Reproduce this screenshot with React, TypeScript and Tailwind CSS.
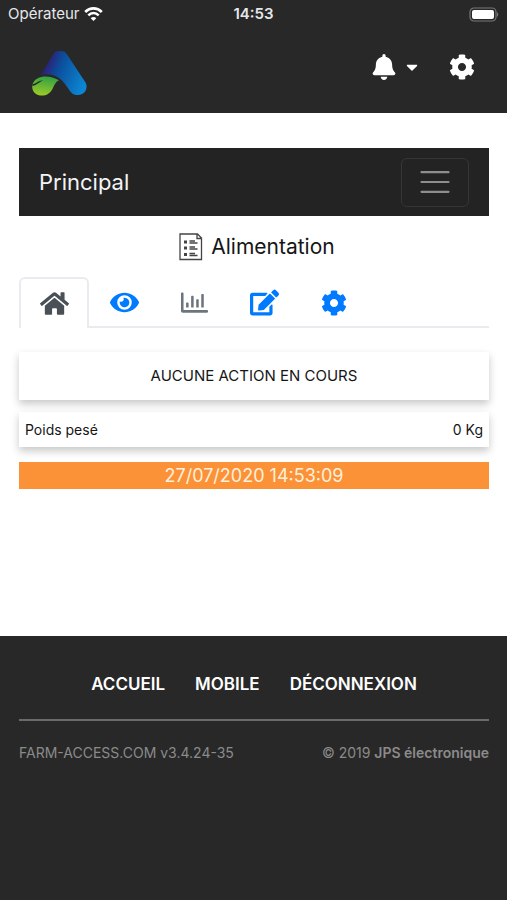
import { useState } from "react";
import {
  FaBell,
  FaCaretDown,
  FaCog,
  FaEdit,
  FaEye,
  FaHome,
  FaRegChartBar,
} from "react-icons/fa";

const tabs = [
  { id: "home", label: "Accueil", icon: FaHome, color: "text-[#495057]", size: 29 },
  { id: "view", label: "Visualisation", icon: FaEye, color: "text-[#007bff]", size: 29 },
  { id: "stats", label: "Statistiques", icon: FaRegChartBar, color: "text-[#6c757d]", size: 27 },
  { id: "edit", label: "Modifier", icon: FaEdit, color: "text-[#007bff]", size: 29 },
  { id: "settings", label: "Réglages", icon: FaCog, color: "text-[#007bff]", size: 26 },
];

const links = ["Accueil", "Mobile", "Déconnexion"];

const Logo = () => (
  <svg width="55" height="46" viewBox="0 0 56 46" role="img" aria-label="Farm Access">
    <defs>
      <linearGradient id="blue" x1="0.1" y1="0.4" x2="0.95" y2="0.75">
        <stop offset="0" stopColor="#2a2478" />
        <stop offset="0.3" stopColor="#0b4f9c" />
        <stop offset="1" stopColor="#0c86d2" />
      </linearGradient>
      <linearGradient id="leaf" x1="0.6" y1="0" x2="0.4" y2="1">
        <stop offset="0" stopColor="#2fa044" />
        <stop offset="1" stopColor="#9ccb26" />
      </linearGradient>
    </defs>
    <path
      fill="url(#blue)"
      d="M9 25 L21.500 4 Q23.500 0.500 27 0.500 H30 Q33.500 0.500 35.500 4 L54 32 C58 38 54 45.500 47 45.500 C42 45.500 40 43.500 37.500 39.500 L33 33.500 C27 25.500 18 23 9 25 Z"
    />
    <path
      fill="url(#leaf)"
      d="M0.500 35 C2 29 8 26.500 14 26.500 C19 26.500 23 28 27.500 30.500 C24 32 23 35 21 39 C18 44 15 46 10 46 C4 46 -1 41.500 0.500 35 Z"
    />
    <path fill="#282828" d="M0.500 34.500 C4 34 6 30.500 11.500 30.300 C8 31.500 6 34.500 0.500 36.300 Z" />
  </svg>
);

const StatusBar = () => (
  <div className="grid grid-cols-3 items-center px-2 h-7 text-[15px] text-gray-200">
    <div className="flex items-center gap-1">
      <span>Opérateur</span>
      <svg width="19" height="14" viewBox="0 0 19 14" fill="none" stroke="#fff" strokeWidth="2.6">
        <path d="M1.200 5 C6 0.200 13 0.200 17.800 5" />
        <path d="M4.300 8.300 C7.400 5.200 11.600 5.200 14.700 8.300" />
        <path d="M9.500 14 L6.700 11.200 C8.300 9.700 10.700 9.700 12.300 11.200 Z" fill="#fff" stroke="none" />
      </svg>
    </div>
    <span className="text-center font-semibold">14:53</span>
    <svg className="justify-self-end" width="31" height="15" viewBox="0 0 31 15">
      <rect x="2" y="1" width="26" height="13" rx="4" fill="none" stroke="#77787a" strokeWidth="1.200" />
      <rect x="4" y="3" width="22" height="9" rx="2" fill="#fff" />
      <path d="M29 5 Q31.500 7.500 29 10 Z" fill="#77787a" />
    </svg>
  </div>
);

const ListIcon = () => (
  <svg width="24" height="28" viewBox="0 0 24 28" fill="none" stroke="#444" aria-hidden="true">
    <path strokeWidth="1.300" d="M1 1 H18.500 L22.500 5 V26.500 H1 Z M18 1 V5.500 H22.500" />
    <path strokeWidth="3" d="M5 9 H8 M5 15 H8 M5 21.500 H8" />
    <path
      strokeWidth="1.300"
      d="M10.500 8 H16 M10.500 10 H18.500 M10.500 14 H16 M10.500 16 H18.500 M10.500 20.500 H16 M10.500 22.500 H18.500"
    />
  </svg>
);

const App = () => {
  const [active, setActive] = useState("home");

  return (
    <div className="min-h-screen flex flex-col bg-white text-[#161616] font-[Inter,sans-serif]">
      <header className="bg-[#282828] pb-4">
        <StatusBar />
        <div className="flex items-center justify-between px-8 pt-2 h-[69px]">
          <a href="#accueil" className="pt-3">
            <Logo />
          </a>
          <div className="flex items-center gap-7 text-white">
            <button className="flex items-center gap-1.5" aria-label="Notifications">
              <FaBell size={26} />
              <FaCaretDown size={18} />
            </button>
            <button aria-label="Réglages">
              <FaCog size={26} />
            </button>
          </div>
        </div>
      </header>

      <main className="pl-[19px] pr-[18px] pt-[35px] pb-[147px]">
        <nav className="flex items-center justify-between bg-[#232323] h-[68px] px-5">
          <a href="#principal" className="text-[22px] text-gray-100">
            Principal
          </a>
          <button
            aria-label="Menu"
            className="flex items-center justify-center w-[68px] h-[49px] border border-[#363636] rounded-md"
          >
            <svg width="30" height="24" viewBox="0 0 30 24" stroke="#8e8e8e" strokeWidth="2.200" strokeLinecap="round">
              <path d="M1.500 2.200 H28.500 M1.500 12 H28.500 M1.500 21.800 H28.500" />
            </svg>
          </button>
        </nav>

        <h1 className="flex items-center justify-center gap-2 h-[61px] pl-1.5 text-[21px]">
          <ListIcon />
          Alimentation
        </h1>

        <div role="tablist" className="flex h-[51px] border-b-2 border-[#e9ecef]">
          {tabs.map((tab) => (
            <button
              key={tab.id}
              role="tab"
              aria-label={tab.label}
              aria-selected={active === tab.id}
              onClick={() => setActive(tab.id)}
              className={`flex items-center justify-center w-[70px] h-[51px] ${tab.color} ${
                active === tab.id ? "bg-white border-2 border-b-0 border-[#e9ecef] rounded-t-md" : ""
              }`}
            >
              <tab.icon size={tab.size} />
            </button>
          ))}
        </div>

        <section className="mt-6 flex items-center justify-center h-12 text-[15px] shadow-[0_4px_8px_rgba(0,0,0,0.22)]">
          AUCUNE ACTION EN COURS
        </section>
        <section className="mt-3 flex items-center justify-between h-[35px] px-1.5 text-sm shadow-[0_4px_8px_rgba(0,0,0,0.22)]">
          <span>Poids pesé</span>
          <span>0 Kg</span>
        </section>
        <div className="mt-[15px] bg-[#fb9238] text-center text-lg leading-[27px] text-[#fff0dd]">
          27/07/2020 14:53:09
        </div>
      </main>

      <footer className="grow bg-[#282828] pl-[19px] pr-[18px] pt-9">
        <div className="flex justify-center gap-[30px] pb-[23px] text-[17px] leading-6 font-semibold uppercase text-white">
          {links.map((link) => (
            <a key={link} href={`#${link.toLowerCase()}`}>
              {link}
            </a>
          ))}
        </div>
        <div className="flex justify-between border-t-2 border-[#6b6b6b] pt-[22px] text-sm text-[#8b8b8b]">
          <span>FARM-ACCESS.COM v3.4.24-35</span>
          <span>
            © 2019 <b className="font-semibold">JPS électronique</b>
          </span>
        </div>
      </footer>
    </div>
  );
};

export default App;
